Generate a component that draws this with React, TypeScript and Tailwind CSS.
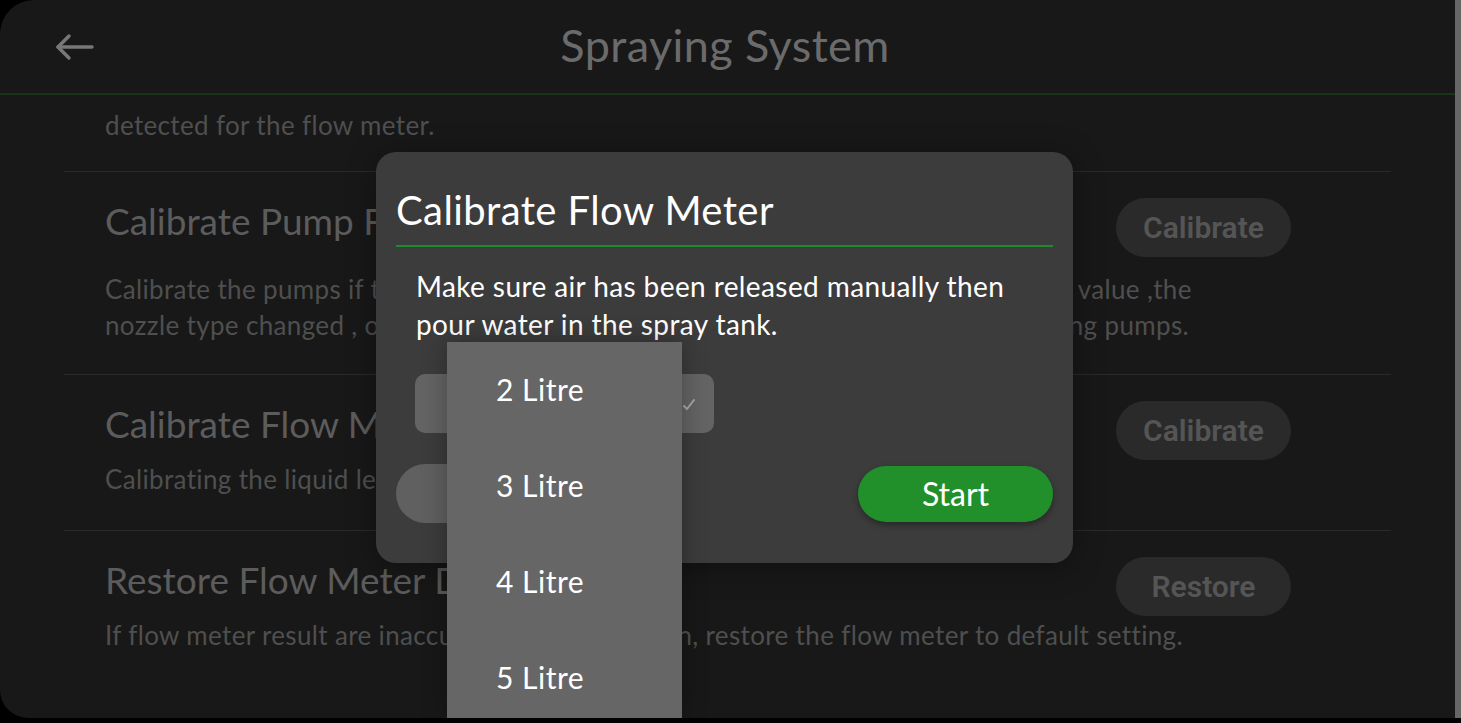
import React from 'react'

const rows = [
  {
    title: 'Calibrate Pump Flow',
    lines: [
      'Calibrate the pumps if the actual spraying flow rate deviates markedly from the set value ,the',
      'nozzle type changed , or after the pumps are replaced, before using the new spraying pumps.',
    ],
    action: 'Calibrate',
    extra: true,
  },
  {
    title: 'Calibrate Flow Meter',
    lines: ['Calibrating the liquid level of the flow meter before spraying.'],
    action: 'Calibrate',
  },
  {
    title: 'Restore Flow Meter Default',
    lines: ['If flow meter result are inaccurate after calibration, restore the flow meter to default setting.'],
    action: 'Restore',
  },
]

const litres = ['2 Litre', '3 Litre', '4 Litre', '5 Litre']

function BackArrow() {
  return (
    <svg width="40" height="28" viewBox="0 0 40 28" fill="none" stroke="#777" strokeWidth="3.5" strokeLinecap="round" strokeLinejoin="round">
      <path d="M3 14h34" />
      <path d="M14 3 3 14l11 11" />
    </svg>
  )
}

export default function App() {
  return (
    <div className="flex w-[1461px] h-[723px] bg-black overflow-hidden" style={{ fontFamily: 'Lato, "Noto Sans", sans-serif' }}>
      <div className="relative flex flex-col w-[1455px] h-[718px] bg-[#181818] rounded-tl-[34px] rounded-bl-[28px] overflow-hidden">
        {/* Header */}
        <div className="relative flex items-center justify-center h-[95px] border-b-2 border-[#173417] shrink-0">
          <button className="absolute left-[55px] top-[33px]">
            <BackArrow />
          </button>
          <h1 className="text-[45px] tracking-[0.4px] text-[#6b6b6b] leading-none -mt-[2px] mr-[5px]">Spraying System</h1>
        </div>

        {/* List */}
        <div className="px-[64px]">
          <div className="pl-[41px] pt-[12px] pb-[28px] border-b border-[#2a2a2a]">
            <p className="text-[26px] tracking-[0.35px] leading-[36px] text-[#4f4f4f]">detected for the flow meter.</p>
          </div>

          {rows.map((row) => (
            <div key={row.title} className={`pl-[41px] pr-[100px] pt-[26px] border-b border-[#2a2a2a] last:border-b-0 ${row.extra ? 'pb-[31px]' : 'pb-[33px]'}`}>
              <div className="flex items-center justify-between h-[59px]">
                <span className="text-[37px] text-[#5c5c5c] leading-none -mt-[14px]">{row.title}</span>
                <span
                  className="flex items-center justify-center w-[175px] h-[59px] rounded-full bg-[#2a2a2a] text-[30px] font-semibold text-[#555]"
                  style={{ fontFamily: 'Roboto, sans-serif' }}
                >
                  {row.action}
                </span>
              </div>
              <div className={row.extra ? 'mt-[14px]' : 'mt-[1px]'}>
                {row.lines.map((l) => (
                  <p key={l} className="text-[26px] tracking-[0.35px] leading-[36px] text-[#4f4f4f] whitespace-nowrap">
                    {l}
                  </p>
                ))}
              </div>
            </div>
          ))}
        </div>

        {/* Dialog */}
        <div className="absolute left-[376px] top-[152px] w-[697px] h-[411px] rounded-[20px] bg-[#3c3c3c] shadow-[0_4px_30px_rgba(0,0,0,0.35)] px-[20px] pt-[38px]">
          <h2 className="text-[40px] tracking-[0.4px] text-white leading-none pb-[15px] border-b-2 border-[#1f8a2a]">Calibrate Flow Meter</h2>
          <p className="mt-[20px] px-[20px] text-[28px] tracking-[0.4px] leading-[38px] text-white">
            Make sure air has been released manually then
            <br />
            pour water in the spray tank.
          </p>
          <div className="mt-[31px] ml-[19px] flex items-center justify-end w-[299px] h-[59px] rounded-[10px] bg-[#646464] pr-[18px]">
            <svg width="14" height="14" viewBox="0 0 14 14" fill="none" stroke="#a8a8a8" strokeWidth="2" strokeLinecap="round" strokeLinejoin="round">
              <path d="M2 9l3 3 7-9" />
            </svg>
          </div>
          <div className="mt-[31px] flex items-center justify-between">
            <span className="w-[240px] h-[59px] rounded-full bg-[#606060]" />
            <span className="flex items-center justify-center w-[195px] h-[56px] rounded-full bg-[#21902b] text-[32px] text-white shadow-[0_3px_6px_rgba(0,0,0,0.35)]">
              Start
            </span>
          </div>
        </div>

        {/* Dropdown */}
        <div className="absolute left-[447px] top-[342px] w-[235px] h-[376px] bg-[#666] shadow-[0_0_24px_rgba(0,0,0,0.3)] pt-[47px]">
          {litres.map((l) => (
            <div key={l} className="h-[96px] pl-[49px] text-[30px] tracking-[0.5px] text-white leading-none">
              <span className="block -translate-y-1/2">{l}</span>
            </div>
          ))}
        </div>
      </div>
      <div className="w-[6px] h-[718px] bg-[#666]" />
    </div>
  )
}
